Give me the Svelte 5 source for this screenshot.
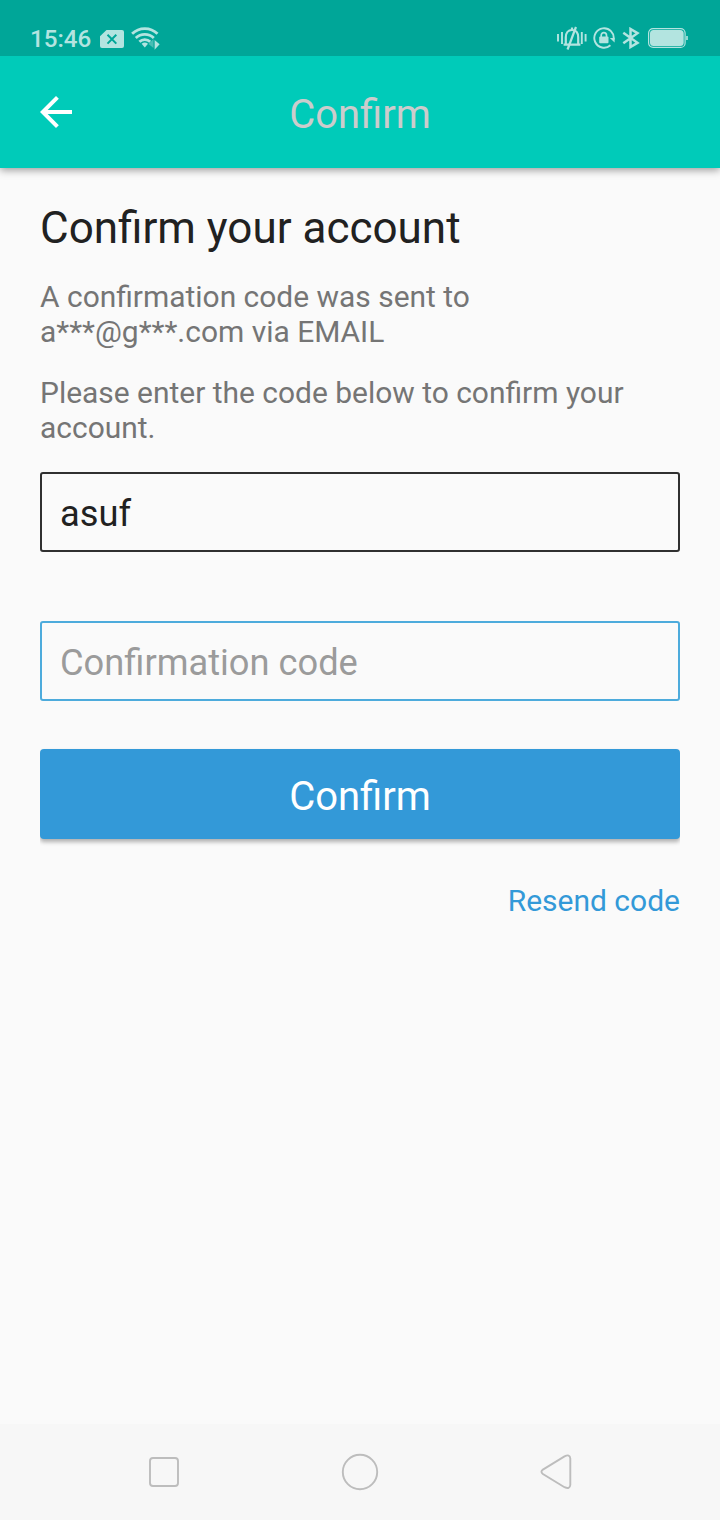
<script>
  let username = $state('asuf');
  let code = $state('');
</script>

<div class="screen">
  <div class="status">
    <div class="group left">
      <span class="time">15:46</span>
      <svg class="sim" width="24" height="18" viewBox="0 0 24 18">
        <path fill="currentColor" d="M6.5 0H22a2 2 0 0 1 2 2v14a2 2 0 0 1-2 2H2a2 2 0 0 1-2-2V6.2z" />
        <path stroke="#00a698" stroke-width="2" d="M7.5 4.8l8.8 8.8M16.3 4.8l-8.8 8.8" />
      </svg>
      <svg class="wifi" width="30" height="24" viewBox="0 0 30 24" fill="none">
        <g stroke="currentColor" stroke-width="2.8">
          <path d="M1.1 7.8a18 18 0 0 1 25.4 0" />
          <path d="M4.8 11.9a13 13 0 0 1 18 0" />
          <path d="M8.4 15.7a7.8 7.8 0 0 1 10.8 0" />
        </g>
        <path fill="currentColor" d="M10.6 17.8q3.2-2.4 6.4 0L13.8 21.5z" />
        <path fill="currentColor" opacity=".4" d="M22.5 13v9l-5-4z" />
        <path fill="currentColor" d="M23.6 14v9.8l5-5.6z" />
      </svg>
    </div>
    <div class="group right">
      <svg width="30" height="24" viewBox="0 0 30 24" fill="none" stroke="currentColor" stroke-width="2.2">
        <path d="M1 8v7.5M5 6v12M24.8 6v12M28.6 8v7.5" stroke-width="1.9" />
        <path d="M6.6 18.7h16.8M8.8 18.5V11.500C8.800 6.500 11.300 4 15 4S21.200 6.500 21.200 11.500V18.500" />
        <path d="M15 1.500v3" />
        <path d="M19 1L10.500 23.500" />
      </svg>
      <svg class="lock" width="22" height="22" viewBox="0 0 22 22" fill="none" stroke="currentColor">
        <path stroke-width="1.9" d="M17.4 18.3A9.7 9.7 0 1 1 20.6 12.5" />
        <path fill="currentColor" stroke="none" d="M16.8 11h4.800v4.600z" />
        <rect x="6.200" y="9.500" width="9.300" height="6.800" rx="1" fill="currentColor" stroke="none" />
        <path stroke-width="1.7" d="M8.200 10V8.300a2.650 2.650 0 0 1 5.300 0V10" />
      </svg>
      <svg class="bt" width="18" height="22" viewBox="0 0 18 22" fill="none" stroke="currentColor" stroke-width="2.5">
        <path d="M1.300 5.800L15.500 15.800 8.500 20V2l7 4.200L1.300 16.200" />
      </svg>
      <svg class="battery" width="41" height="20" viewBox="0 0 41 20">
        <rect x=".6" y=".6" width="36.5" height="18.8" rx="4.5" fill="none" stroke="currentColor" stroke-width="1.2" />
        <rect x="2" y="2" width="33.7" height="16" rx="3.5" fill="currentColor" />
        <rect x="38.2" y="8" width="1.6" height="4" fill="currentColor" />
      </svg>
    </div>
  </div>

  <header>
    <svg class="back" width="48" height="48" viewBox="0 0 24 24" fill="#fff">
      <path d="M20 11H7.83l5.59-5.59L12 4l-8 8 8 8 1.41-1.41L7.83 13H20v-2z" />
    </svg>
    <span class="title">Confirm</span>
  </header>

  <main>
    <h1>Confirm your account</h1>
    <p>A confirmation code was sent to<br />a***@g***.com via EMAIL</p>
    <p>Please enter the code below to confirm your<br />account.</p>
    <input class="user" type="text" bind:value={username} />
    <input class="code" type="text" placeholder="Confirmation code" bind:value={code} />
    <div class="clip"><button type="button">Confirm</button></div>
    <span class="resend">Resend code</span>
  </main>

  <nav>
    <svg width="40" height="40" viewBox="0 0 40 40"><rect x="6" y="6" width="28" height="28" rx="3" /></svg>
    <svg width="40" height="40" viewBox="0 0 40 40"><circle cx="20" cy="20" r="17.2" /></svg>
    <svg width="40" height="40" viewBox="0 0 40 40"><path d="M6.9 17.600L28.500 4.400Q33.900 1.600 34.300 6.500v26.500Q33.900 37.600 28.500 35.200L6.900 22Q4 19.800 6.900 17.600z" /></svg>
  </nav>
</div>

<style>
  :global(body) { margin: 0; background: #fafafa; }
  .screen {
    width: 720px;
    height: 1520px;
    display: flex;
    flex-direction: column;
    background: #fafafa;
    font-family: Roboto, sans-serif;
    overflow: hidden;
  }
  svg { display: block; flex: none; }
  .status {
    position: relative;
    z-index: 1;
    height: 56px;
    flex: none;
    box-sizing: border-box;
    padding: 20px 31px 0 30px;
    background: #00a698;
    color: #b3e4e0;
    display: flex;
    justify-content: space-between;
  }
  .group { display: flex; height: 36px; align-items: center; }
  .time { font-size: 24.2px; font-weight: 500; line-height: 36px; width: 70px; padding-top: 2px; white-space: nowrap; }
  .sim { margin-top: 2px; }
  .wifi { margin-left: 7px; }
  .lock { margin-left: 6px; }
  .bt { margin-left: 7px; }
  .battery { margin-left: 8.5px; }
  header {
    height: 112px;
    flex: none;
    box-sizing: border-box;
    padding: 0 32px;
    background: #00cbb9;
    box-shadow: 0 2px 8px rgba(0, 0, 0, .4);
    display: grid;
    grid-template-columns: 48px 1fr 48px;
    align-items: center;
  }
  .title { text-align: center; font-size: 40px; font-weight: 400; line-height: 48px; color: #ccc; padding-top: 6px; }
  main { flex: 1; padding: 34px 40px 0; display: flex; flex-direction: column; }
  h1 { margin: 0 0 25px; font-size: 44px; font-weight: 400; line-height: 52px; color: #212121; white-space: nowrap; }
  p { margin: 0 0 26px; font-size: 29.95px; line-height: 35px; color: #757575; white-space: nowrap; }
  p + p { margin-bottom: 27px; }
  input {
    box-sizing: border-box;
    height: 80px;
    width: 640px;
    margin: 0;
    padding: 2px 18px 0;
    border: 2px solid #303030;
    border-radius: 3px;
    background: #fafafa;
    font: 400 36.25px Roboto, sans-serif;
    color: #212121;
    outline: none;
  }
  .code { margin-top: 69px; border-color: #4dabdc; }
  .code::placeholder { color: #9b9b9b; opacity: 1; }
  .clip { margin-top: 44px; padding: 4px 0 12px; overflow: hidden; }
  button {
    display: block;
    width: 640px;
    height: 90px;
    padding: 4px 0 0;
    border: 0;
    border-radius: 4px;
    background: #3399d8;
    box-shadow: 0 3px 4px rgba(0, 0, 0, .3);
    color: #fff;
    font: 400 40px Roboto, sans-serif;
  }
  .resend { align-self: flex-end; margin-top: 32px; font-size: 30px; line-height: 35px; color: #3399d8; }
  nav {
    height: 96px;
    flex: none;
    box-sizing: border-box;
    padding: 0 144px;
    background: #f7f7f7;
    display: flex;
    justify-content: space-between;
    align-items: center;
  }
  nav svg { fill: none; stroke: #bdbdbd; stroke-width: 1.9; }
</style>
